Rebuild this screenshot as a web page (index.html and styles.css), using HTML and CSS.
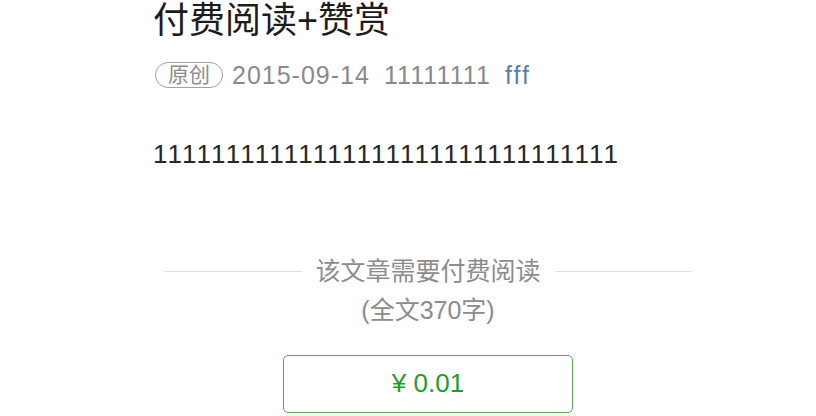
FILE: index.html
```html
<!DOCTYPE html>
<html>
<head>
<meta charset="utf-8">
<title>付费阅读+赞赏</title>
<link rel="stylesheet" href="styles.css">
</head>
<body>
<div class="page">
  <h1 class="title">付费阅读+赞赏</h1>
  <div class="meta">
    <span class="badge">原创</span>
    <span class="date latin">2015-09-14</span>
    <span class="author latin">11111111</span>
    <a class="account latin">fff</a>
  </div>
  <p class="content latin">11111111111111111111111111111111</p>
  <div class="pay">
    <div class="pay-head">
      <span class="rule"></span>
      <span class="pay-tip">该文章需要付费阅读</span>
      <span class="rule"></span>
    </div>
    <div class="pay-count">(全文370字)</div>
    <div class="pay-btn latin">¥ 0.01</div>
  </div>
</div>
</body>
</html>
```
FILE: styles.css
```css
html, body {
  margin: 0;
  padding: 0;
  background: #ffffff;
}
body {
  font-family: "Liberation Sans", Arial, "Noto Sans CJK SC", sans-serif;
}
.latin {
  font-family: "Liberation Sans", Arial, sans-serif;
}
.page {
  width: 550px;
  margin-left: 153px;
}
.title {
  margin: 0;
  padding-top: 1px;
  font-size: 36px;
  line-height: 40px;
  font-weight: normal;
  color: #1c1c1c;
}
.meta {
  margin-top: 19px;
  height: 30px;
  display: flex;
  align-items: center;
  font-size: 25px;
  line-height: 30px;
  color: #8a8a8a;
}
.badge {
  box-sizing: border-box;
  height: 26px;
  margin-left: 2px;
  padding: 0 12px;
  border: 1.5px solid #a0a0a0;
  border-radius: 13px;
  font-size: 21px;
  line-height: 23px;
  color: #8c8c8c;
}
.date {
  margin-left: 9px;
  letter-spacing: 1px;
}
.author {
  margin-left: 14px;
  letter-spacing: 1.1px;
}
.account {
  margin-left: 14px;
  letter-spacing: 2px;
  color: #607fa6;
}
.content {
  margin: 46px 0 0;
  font-size: 26px;
  line-height: 36px;
  letter-spacing: 2px;
  color: #262626;
}
.pay {
  margin: 84px 11px 0;
}
.pay-head {
  display: flex;
  align-items: center;
  height: 30px;
}
.rule {
  flex: 1;
  height: 1px;
  background: #e2e2e2;
}
.pay-tip {
  margin: 0 14px;
  font-size: 25px;
  line-height: 30px;
  color: #8c8c8c;
}
.pay-count {
  margin-top: 9px;
  text-align: center;
  font-size: 25px;
  line-height: 30px;
  color: #8c8c8c;
}
.pay-btn {
  box-sizing: border-box;
  width: 290px;
  height: 58px;
  margin: 30px auto 0;
  border: 1.5px solid #5aa55a;
  border-radius: 5px;
  text-align: center;
  font-size: 26px;
  line-height: 55px;
  color: #1f9e1f;
}
```
